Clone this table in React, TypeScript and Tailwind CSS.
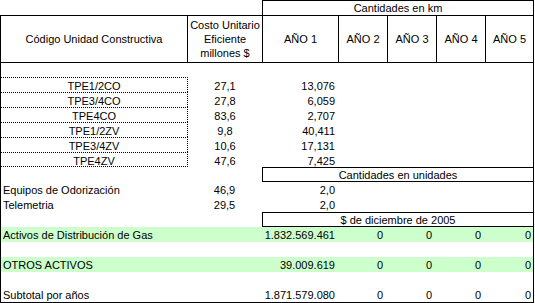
import React from "react";

const B = "border-black";

function Cell({ w, className = "", children }: { w: string; className?: string; children?: React.ReactNode }) {
  return <div className={`${w} shrink-0 overflow-visible whitespace-nowrap ${className}`}>{children}</div>;
}

type RowProps = {
  c1?: React.ReactNode;
  c2?: React.ReactNode;
  c3?: React.ReactNode;
  zeros?: boolean;
  green?: boolean;
};

function Row({ c1, c2, c3, zeros, green }: RowProps) {
  return (
    <div className={`flex h-[15px] leading-[17px] ${green ? "bg-[#ccffcc]" : ""}`}>
      <Cell w="w-[186px]" className="pl-[2px]">{c1}</Cell>
      <Cell w="w-[75px]" className="text-center">{c2}</Cell>
      <Cell w="w-[76px]" className="text-right pr-[3px]">{c3}</Cell>
      <Cell w="w-[49px]" className="text-right pr-[4px]">{zeros ? "0" : null}</Cell>
      <Cell w="w-[49px]" className="text-right pr-[4px]">{zeros ? "0" : null}</Cell>
      <Cell w="w-[49px]" className="text-right pr-[4px]">{zeros ? "0" : null}</Cell>
      <Cell w="w-[48px]" className="text-right pr-[2px]">{zeros ? "0" : null}</Cell>
    </div>
  );
}

function TpeRow({ code, cost, qty, last }: { code: string; cost: string; qty: string; last?: boolean }) {
  return (
    <div className="flex h-[15px] leading-[19px]">
      <div
        className={`w-[187px] shrink-0 text-center border-t border-r border-dotted ${B} ${last ? "border-b" : ""}`}
      >
        <div className="h-full overflow-visible -mt-[1px]">{code}</div>
      </div>
      <div className="w-[74px] shrink-0 text-center">{cost}</div>
      <div className="w-[76px] shrink-0 text-right pr-[3px]">{qty}</div>
    </div>
  );
}

function BoxRow({ label }: { label: string }) {
  return (
    <div className="flex h-[15px]">
      <div className="w-[261px] shrink-0" />
      <div className={`w-[271px] shrink-0 border-t border-l border-b ${B} text-center leading-[14px]`}>{label}</div>
    </div>
  );
}

export default function App() {
  return (
    <div className="w-[535px] h-[303px] bg-white text-black text-[11px] font-['Liberation_Sans',Arial,sans-serif] overflow-hidden">
      {/* top header box */}
      <div className="flex h-[15px]">
        <div className="w-[262px] shrink-0" />
        <div className={`w-[272px] shrink-0 border-t border-l border-r ${B} text-center leading-[14px]`}>
          Cantidades en km
        </div>
      </div>
      <div className={`w-[534px] border ${B}`}>
        {/* header row */}
        <div className={`flex h-[47px] border-b ${B}`}>
          <div className="w-[186px] shrink-0 flex items-center justify-center">Código Unidad Constructiva</div>
          <div className={`w-[75px] shrink-0 border-l ${B} flex items-center justify-center text-center leading-[14px]`}>
            Costo Unitario
            <br />
            Eficiente
            <br />
            millones $
          </div>
          <div className={`w-[76px] shrink-0 border-l ${B} flex items-center justify-center`}>AÑO 1</div>
          <div className={`w-[49px] shrink-0 border-l ${B} flex items-center justify-center`}>AÑO 2</div>
          <div className={`w-[49px] shrink-0 border-l ${B} flex items-center justify-center`}>AÑO 3</div>
          <div className={`w-[49px] shrink-0 border-l ${B} flex items-center justify-center`}>AÑO 4</div>
          <div className={`w-[48px] shrink-0 border-l ${B} flex items-center justify-center`}>AÑO 5</div>
        </div>
        <div className="h-[14px]" />
        <TpeRow code="TPE1/2CO" cost="27,1" qty="13,076" />
        <TpeRow code="TPE3/4CO" cost="27,8" qty="6,059" />
        <TpeRow code="TPE4CO" cost="83,6" qty="2,707" />
        <TpeRow code="TPE1/2ZV" cost="9,8" qty="40,411" />
        <TpeRow code="TPE3/4ZV" cost="10,6" qty="17,131" />
        <TpeRow code="TPE4ZV" cost="47,6" qty="7,425" last />
        <BoxRow label="Cantidades en unidades" />
        <Row c1="Equipos de Odorización" c2="46,9" c3="2,0" />
        <Row c1="Telemetria" c2="29,5" c3="2,0" />
        <BoxRow label="$ de diciembre de 2005" />
        <Row c1="Activos de Distribución de Gas" c3="1.832.569.461" zeros green />
        <Row />
        <Row c1="OTROS ACTIVOS" c3="39.009.619" zeros green />
        <Row />
        <Row c1="Subtotal por años" c3="1.871.579.080" zeros />
      </div>
    </div>
  );
}
